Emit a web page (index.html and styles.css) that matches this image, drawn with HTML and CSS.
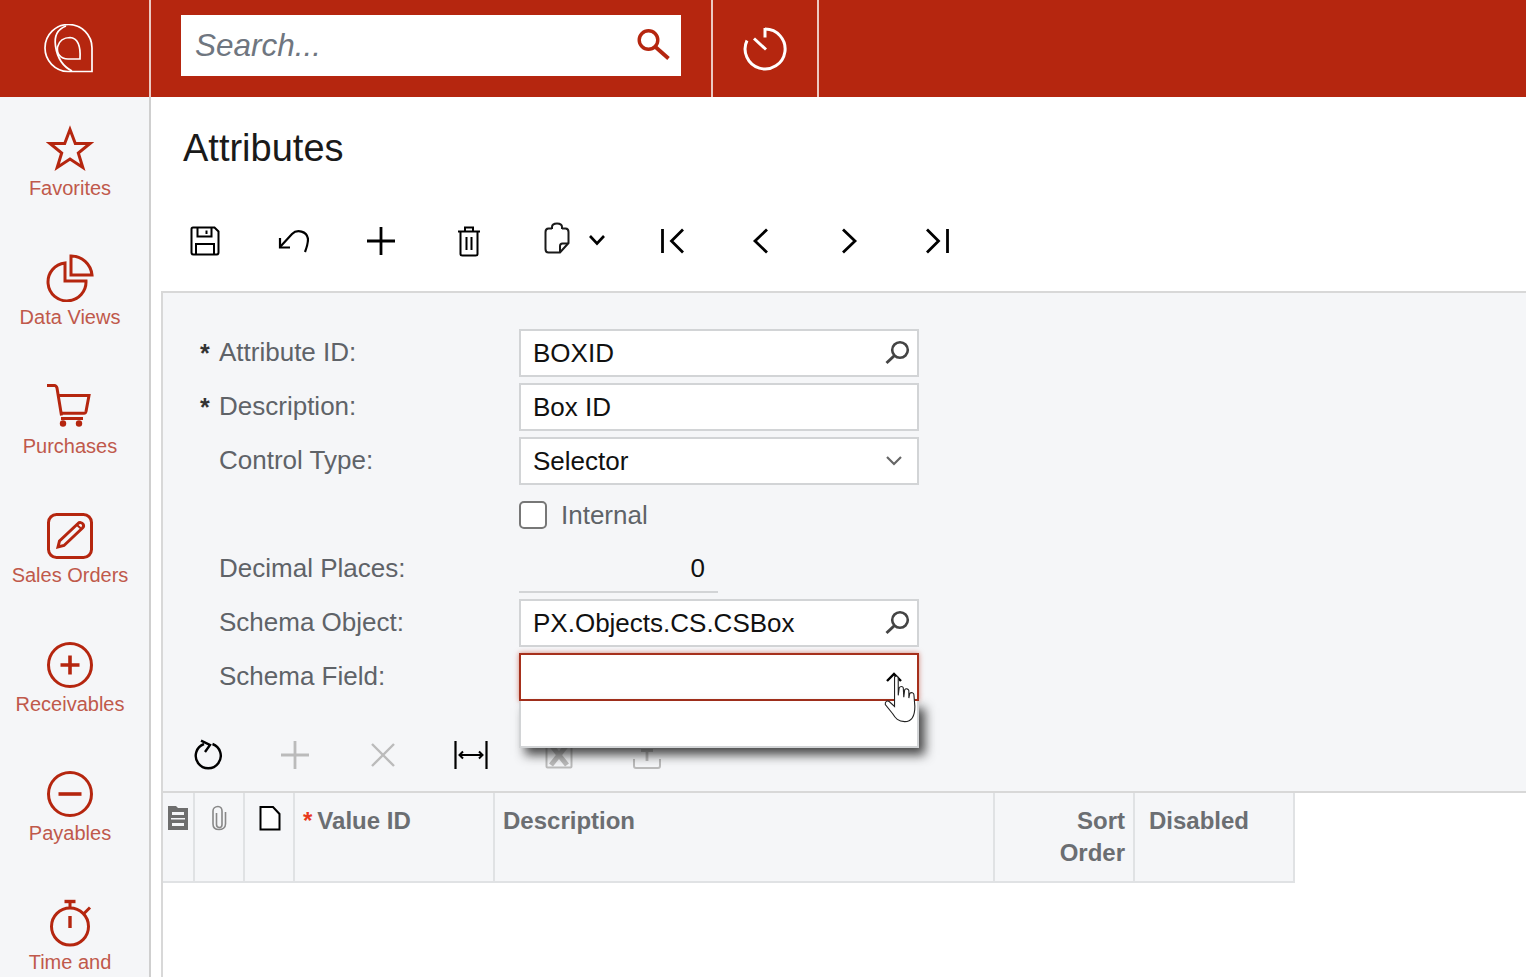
FILE: index.html
```html
<!DOCTYPE html>
<html lang="en">
<head>
<meta charset="utf-8">
<title>Attributes</title>
<link rel="stylesheet" href="styles.css">
</head>
<body>
<header class="topbar">
  <div class="logo-cell">
    <svg width="50" height="50" viewBox="0 0 50 50" fill="none" stroke="#fff" stroke-width="1.700"><path d="M48 47.500H24A23.500 23.500 0 1 1 48 24Z"/><path d="M22 2C14 5 10 12 11.500 22C13 32 18 42 28 47"/><path d="M36 35H24C16 35 12.500 29 13.500 23C15 17 20 13.500 26 13.500C32 14 37 19 36 35Z"/></svg>
  </div>
  <div class="search-cell">
    <div class="search-box">
      <span class="search-text">Search...</span>
      <svg width="34" height="34" viewBox="0 0 34 34" fill="none" stroke="#b5260f" stroke-width="3.400"><circle cx="11.500" cy="11" r="9.300"/><path d="M18.500 18L31.500 29.500" stroke-width="3.800"/></svg>
    </div>
  </div>
  <div class="history-cell">
    <svg width="46" height="46" viewBox="0 0 46 46" fill="none" stroke="#fff" stroke-width="3"><path d="M23 3A20 20 0 1 1 5 14.500"/><path d="M23 2V11.500"/><path d="M12 12.500L24 23.500"/></svg>
  </div>
</header>
<div class="body-row">
  <nav class="sidebar">
    <a class="nav-item"><svg class="nav-icon" viewBox="0 0 48 48" fill="none" stroke="#b5260f" stroke-width="3"><path d="M24 4.500L29.300 18.500H44L32.300 28L36.800 42.500L24 34L11.200 42.500L15.700 28L4 18.500H18.700Z"/></svg><span>Favorites</span></a>
    <a class="nav-item"><svg class="nav-icon" viewBox="0 0 48 48" fill="none" stroke="#b5260f" stroke-width="3"><path d="M19 9A19 19 0 1 0 40 27H19Z"/><path d="M25 2A21 21 0 0 1 46 21H25Z"/></svg><span>Data Views</span></a>
    <a class="nav-item"><svg class="nav-icon" viewBox="0 0 48 48" fill="none" stroke="#b5260f" stroke-width="3"><path d="M1 2.500H8.500C10 2.500 10.500 3.500 11 5L15.500 32.500"/><path d="M11 12.500H43L40 28.500C39.700 29.700 39 30.200 38 30.200H15"/><path d="M15 35.500H37"/><circle cx="17" cy="40.500" r="3.200" fill="#b5260f" stroke="none"/><circle cx="33" cy="40.500" r="3.200" fill="#b5260f" stroke="none"/></svg><span>Purchases</span></a>
    <a class="nav-item"><svg class="nav-icon" viewBox="0 0 48 48" fill="none" stroke="#b5260f" stroke-width="3"><rect x="2.500" y="2.500" width="43" height="43" rx="8"/><path d="M12 35L13.500 29L32 11.500C33.500 10 36 10.500 37 12C38 13.500 37.500 15 36.500 16L18 33.500Z"/><path d="M31 13L36 17.500" stroke-width="2"/></svg><span>Sales Orders</span></a>
    <a class="nav-item"><svg class="nav-icon" viewBox="0 0 48 48" fill="none" stroke="#b5260f" stroke-width="3"><circle cx="24" cy="24" r="21.500"/><path d="M24 14.500V33.500M14.500 24H33.500" stroke-width="3.600"/></svg><span>Receivables</span></a>
    <a class="nav-item"><svg class="nav-icon" viewBox="0 0 48 48" fill="none" stroke="#b5260f" stroke-width="3"><circle cx="24" cy="24" r="21.500"/><path d="M12.500 24H35.500" stroke-width="3.600"/></svg><span>Payables</span></a>
    <a class="nav-item"><svg class="nav-icon" viewBox="0 0 48 48" fill="none" stroke="#b5260f" stroke-width="3"><circle cx="24" cy="27.500" r="18.500"/><path d="M18.500 2.500H29.500" stroke-width="3.400"/><path d="M24 3V8"/><path d="M24 17V29" stroke-width="3.400"/><path d="M38 14.500L44 8.500"/></svg><span>Time and</span></a>
  </nav>
  <main class="main">
    <h1 class="title">Attributes</h1>
    <div class="toolbar">
      <span class="tool"><svg width="30" height="30" viewBox="0 0 30 30" fill="none" stroke="#000" stroke-width="2"><path d="M3 1.500H24.500L28.500 5.500V26.500C28.500 27.500 27.800 28.500 26.500 28.500H3.500C2.200 28.500 1.500 27.500 1.500 26.500V3C1.500 2 2.200 1.500 3 1.500Z"/><path d="M7.500 2V10.500H21.500V2"/><path d="M16.500 4.500V8"/><path d="M6 28V18H24V28"/></svg></span>
      <span class="tool"><svg width="32" height="26" viewBox="0 0 32 26" fill="none" stroke="#000" stroke-width="2.200"><path d="M3 10V19.500H13"/><path d="M3 19L15 6C20 1 30 3 31 11C31 15 30 19 28 24"/></svg></span>
      <span class="tool"><svg width="30" height="30" viewBox="0 0 30 30" fill="none" stroke="#000" stroke-width="2.800"><path d="M15 1V29M1 15H29"/></svg></span>
      <span class="tool"><svg width="24" height="32" viewBox="0 0 24 32" fill="none" stroke="#000" stroke-width="2"><path d="M1 6.500H23"/><path d="M8 6V2.500H16V6"/><path d="M3.500 7V29C3.500 30 4.500 30.500 5.500 30.500H18.500C19.500 30.500 20.500 30 20.500 29V7"/><path d="M9.500 12V25M14.500 12V25"/></svg></span>
      <span class="tool tool-split">
        <svg class="clip-icon" width="26" height="32" viewBox="0 3 26 32" fill="none" stroke="#1a1a1a" stroke-width="2"><path d="M8 6.500H4.500C2.500 6.500 1.500 8 1.500 10V27C1.500 29 2.500 30.500 4.500 30.500H16L24.500 21V10C24.500 8 23.500 6.500 21.500 6.500H18"/><path d="M8 7V5C8 3 10 1.500 13 1.500C16 1.500 18 3 18 5V7"/><path d="M16 30V24C16 22.500 17 21.500 18.500 21.500H24"/></svg>
        <svg width="18" height="12" viewBox="0 0 18 12" fill="none" stroke="#000" stroke-width="2.600"><path d="M2 1L9 8.500L16 1"/></svg>
      </span>
      <span class="tool"><svg width="26" height="26" viewBox="0 0 26 26" fill="none" stroke="#000" stroke-width="2.800"><path d="M2.500 1V25"/><path d="M23 1.500L11.500 13L23 24.500"/></svg></span>
      <span class="tool"><svg width="26" height="26" viewBox="0 0 26 26" fill="none" stroke="#000" stroke-width="2.800"><path d="M19 1.500L7 13L19 24.500"/></svg></span>
      <span class="tool"><svg width="26" height="26" viewBox="0 0 26 26" fill="none" stroke="#000" stroke-width="2.800"><path d="M7 1.500L19 13L7 24.500"/></svg></span>
      <span class="tool"><svg width="26" height="26" viewBox="0 0 26 26" fill="none" stroke="#000" stroke-width="2.800"><path d="M23.500 1V25"/><path d="M3 1.500L14.500 13L3 24.500"/></svg></span>
    </div>
    <section class="panel">
      <div class="panel-top">
        <div class="form">
          <span class="req">*</span><label class="lbl">Attribute ID:</label>
          <div class="field"><span>BOXID</span><svg class="field-icon" width="26" height="26" viewBox="0 0 26 26" fill="none" stroke="#444" stroke-width="2.600"><circle cx="19" cy="10" r="7.800"/><path d="M13.500 15.500L5.500 23" stroke-width="3"/></svg></div>
          <span class="req">*</span><label class="lbl">Description:</label>
          <div class="field"><span>Box ID</span></div>
          <span></span><label class="lbl">Control Type:</label>
          <div class="field"><span>Selector</span><svg class="field-icon" width="26" height="26" viewBox="0 0 26 26" fill="none" stroke="#666" stroke-width="2.200"><path d="M6 9L13 16L20 9"/></svg></div>
          <span></span><span></span>
          <div class="check-row"><span class="check"></span><span>Internal</span></div>
          <span></span><label class="lbl">Decimal Places:</label>
          <div class="num-field"><span>0</span></div>
          <span></span><label class="lbl">Schema Object:</label>
          <div class="field"><span>PX.Objects.CS.CSBox</span><svg class="field-icon" width="26" height="26" viewBox="0 0 26 26" fill="none" stroke="#444" stroke-width="2.600"><circle cx="19" cy="10" r="7.800"/><path d="M13.500 15.500L5.500 23" stroke-width="3"/></svg></div>
          <span></span><label class="lbl">Schema Field:</label>
          <div class="field field-open"><svg class="field-icon" width="26" height="26" viewBox="0 0 26 26" fill="none" stroke="#000" stroke-width="2.400"><path d="M6 17L13 10L20 17"/></svg>
            <div class="dropdown"></div>
            <svg class="hand" width="34" height="48" viewBox="0 0 36 52" fill="#fff" stroke="#222" stroke-width="1.200"><path d="M11 2C12.500 0.500 15 1 15 4V22L16 14C17 12 20 12 20.500 14L21 24L22 16C23 14.500 26 14.500 26.500 17V25L27.500 20C29 18.500 32 19 32 21.500L33 34C33 44 30 50.500 22 50.500C15 50.500 12 47 9 42L1 32C0.500 29 3 27 5.500 29L11 34Z"/></svg>
          </div>
        </div>
        <div class="grid-toolbar">
          <span class="tool"><svg width="30" height="32" viewBox="-1 0 30 32" fill="none" stroke="#000" stroke-width="2.400"><path d="M19.500 5A12.500 12.500 0 1 1 11 5"/><path d="M8 1.700L17 6L12 13"/></svg></span>
          <span class="tool"><svg width="30" height="30" viewBox="0 0 30 30" fill="none" stroke="#bbb" stroke-width="2.800"><path d="M15 1V29M1 15H29"/></svg></span>
          <span class="tool"><svg width="26" height="26" viewBox="0 0 26 26" fill="none" stroke="#bbb" stroke-width="2.400"><path d="M2 2L24 24M24 2L2 24"/></svg></span>
          <span class="tool"><svg width="34" height="30" viewBox="0 0 34 30" fill="none" stroke="#000" stroke-width="2"><path d="M1.500 1V29M32.500 1V29" stroke-width="2.200"/><path d="M6 15H28"/><path d="M9 11.500L5.500 15L9 18.500M25 11.500L28.500 15L25 18.500"/></svg></span>
          <span class="tool"><svg width="28" height="28" viewBox="0 0 28 28" fill="none" stroke="#bbb" stroke-width="2"><rect x="1.500" y="1.500" width="25" height="25" rx="1"/><path d="M6 4L22 24M22 4L6 24" stroke-width="5"/></svg></span>
          <span class="tool"><svg width="28" height="28" viewBox="0 0 28 28" fill="none" stroke="#bbb" stroke-width="2"><path d="M14 9V20M8 9.500H20" stroke-width="2.800"/><path d="M1 18V25C1 26 2 27 3 27H25C26 27 27 26 27 25V18"/></svg></span>
        </div>
      </div>
      <div class="grid-head">
        <div class="th th-a"><svg width="20" height="26" viewBox="0 0 20 26" fill="#6e6e6e"><path d="M0 1H8L10 3H20V25H0Z"/><path d="M4 7H16V10H4ZM3 13H17V14.500H3ZM4 18H16V21H4Z" fill="#f5f6f8"/></svg></div>
        <div class="th th-b"><svg width="18" height="26" viewBox="0 0 18 26" fill="none" stroke="#888" stroke-width="1.600"><path d="M6.500 8V19.500C6.500 21.500 8 22.500 9.500 22.500C11 22.500 12 21.500 12 19.500V6C12 3.500 10.500 1.500 8 1.500C5 1.500 3 3.500 3 6V19C3 22.500 5.500 24.500 9 24.500C12.500 24.500 15.500 22.500 15.500 19V7"/></svg></div>
        <div class="th th-c"><svg width="22" height="26" viewBox="0 0 22 26" fill="#fff" stroke="#000" stroke-width="2"><path d="M1.500 2H14L20.500 9V24.500H1.500Z"/></svg></div>
        <div class="th th-d"><span class="star">*</span>Value ID</div>
        <div class="th th-e">Description</div>
        <div class="th th-f">Sort<br>Order</div>
        <div class="th th-g">Disabled</div>
      </div>
    </section>
  </main>
</div>
</body>
</html>
```
FILE: styles.css
```css
* { box-sizing: border-box; }
html, body { margin: 0; height: 977px; overflow: hidden; }
body { font-family: "Liberation Sans", Arial, sans-serif; background: #fff; display: flex; flex-direction: column; }

.topbar { height: 97px; background: #b5260f; display: flex; flex: none; }
.logo-cell { width: 151px; border-right: 2px solid #ecc9c2; display: flex; align-items: center; justify-content: center; padding-right: 11px; }
.search-cell { width: 562px; border-right: 2px solid #ecc9c2; padding: 15px 0 0 30px; }
.search-box { width: 500px; height: 61px; background: #fff; display: flex; align-items: center; justify-content: space-between; padding: 0 10px 0 14px; }
.search-text { font-size: 31.500px; font-style: italic; color: #6f7680; }
.history-cell { width: 106px; border-right: 2px solid #ecc9c2; display: flex; align-items: center; justify-content: center; }

.body-row { flex: 1; display: flex; min-height: 0; }
.sidebar { width: 151px; flex: none; background: #f5f6f8; border-right: 2px solid #cfcfcf; padding: 28px 9px 0 0; overflow: hidden; }
.nav-item { height: 129px; display: flex; flex-direction: column; align-items: center; color: #c0594b; font-size: 20px; line-height: 24px; white-space: nowrap; }
.nav-icon { width: 48px; height: 48px; flex: none; margin-bottom: 3px; }

.main { flex: 1; min-width: 0; }
.title { margin: 0; padding: 30px 0 0 32px; height: 100px; font-weight: 400; font-size: 38px; line-height: 42px; color: #1a1a1a; }
.toolbar { height: 94px; display: flex; align-items: center; padding: 0 0 6px 10px; }
.tool { width: 88px; flex: none; display: flex; align-items: center; justify-content: center; }
.tool-split { width: 116px; justify-content: flex-start; padding-left: 31px; gap: 18px; }
.clip-icon { overflow: visible; }

.panel { margin-left: 10px; height: 686px; background: #fff; border-top: 2px solid #d8d8d8; border-left: 2px solid #d8d8d8; position: relative; }
.panel-top { background: #f5f6f8; border-bottom: 2px solid #d8d8d8; }
.form { display: grid; grid-template-columns: 19px 300px 400px; grid-auto-rows: 48px; row-gap: 6px; padding: 36px 0 0 37px; align-items: center; }
.req { font-size: 25px; font-weight: 700; color: #333; }
.lbl { font-size: 26px; line-height: 46px; height: 48px; color: #5f6368; }
.field { height: 48px; background: #fff; border: 2px solid #d2d4d6; display: flex; align-items: center; justify-content: space-between; padding: 0 10px 0 12px; font-size: 26px; color: #111; position: relative; }
.field-icon { overflow: visible; }
.field-open { border-color: #a6301c; box-shadow: 0 0 5px rgba(181,38,15,.55); justify-content: flex-end; z-index: 2; }
.dropdown { position: absolute; left: -2px; right: -2px; top: 46px; height: 47px; background: #fff; border: 2px solid #d2d4d6; border-top: 0; box-shadow: 6px 7px 10px rgba(30,30,30,.8); z-index: -1; }
.hand { position: absolute; right: -1px; top: 20px; }
.check-row { display: flex; align-items: center; gap: 14px; font-size: 26px; color: #5f6368; }
.check { width: 28px; height: 28px; border: 2px solid #777; border-radius: 5px; background: #fff; }
.num-field { width: 199px; height: 48px; border-bottom: 2px solid #d2d4d6; display: flex; align-items: center; justify-content: flex-end; padding-right: 13px; font-size: 26px; color: #111; }

.grid-toolbar { height: 90px; display: flex; align-items: center; padding: 18px 0 0; }
.grid-head { display: flex; height: 90px; }
.th { height: 90px; background: #f5f6f8; border-right: 2px solid #e0e2e4; border-bottom: 2px solid #e0e2e4; font-size: 24px; font-weight: 700; line-height: 32px; color: #6b6e72; padding: 12px 8px 0; flex: none; }
.th-a { width: 32px; padding: 12px 0 0 5px; }
.th-b { width: 50px; padding: 12px 0 0 15px; }
.th-c { width: 50px; padding: 12px 0 0 14px; }
.th-d { width: 200px; }
.th-e { width: 500px; }
.th-f { width: 140px; text-align: right; }
.th-g { width: 160px; padding-left: 14px; }
.star { color: #e8391d; margin-right: 5px; }
```
